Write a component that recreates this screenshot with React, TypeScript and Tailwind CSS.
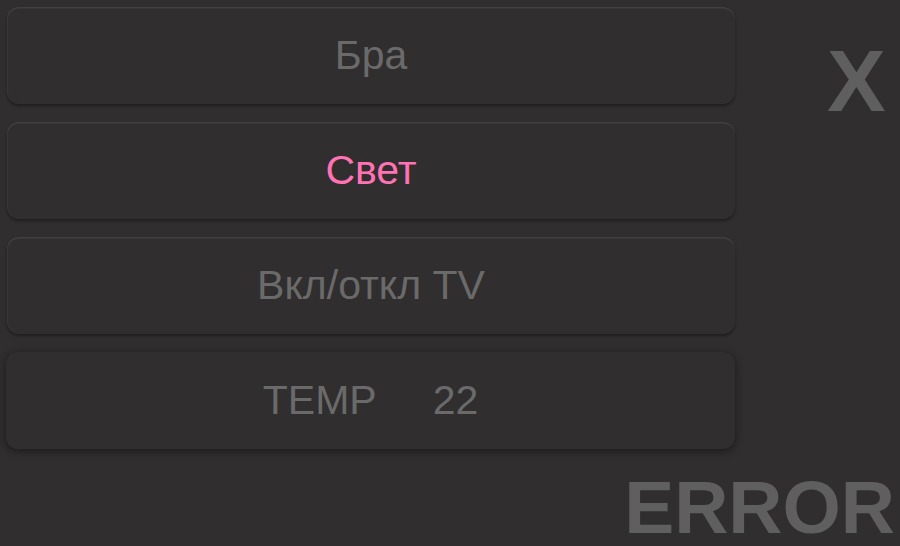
import React from 'react';

const buttons = [
  { label: 'Бра', active: false },
  { label: 'Свет', active: true },
  { label: 'Вкл/откл TV', active: false },
];

const App: React.FC = () => {
  return (
    <div className="w-[900px] h-[546px] overflow-hidden bg-[#302e2f] flex flex-col" style={{ fontFamily: '"Liberation Sans", Arial, sans-serif' }}>
      <div className="flex">
        <div className="w-[742px] pl-[7px] pr-[7px] pt-[7px] flex flex-col gap-[18px]">
          {buttons.map(b => (
            <div
              key={b.label}
              className="h-[97px] rounded-[12px] bg-[#302e2f] flex items-center justify-center text-[41px] leading-none shadow-[inset_0_1.5px_1px_rgba(255,255,255,0.09),inset_1px_0_1px_rgba(255,255,255,0.04),0_2px_3px_rgba(0,0,0,0.35)]"
            >
              <span className={b.active ? 'text-[#ff72b3]' : 'text-[#6b6a6a]'}>{b.label}</span>
            </div>
          ))}
          {/* температура: без подсветки сверху, тень шире */}
          <div className="h-[97px] -ml-[1px] rounded-[12px] bg-[#302e2f] flex items-center justify-center text-[41px] leading-none text-[#6b6a6a] shadow-[0_2px_8px_rgba(0,0,0,0.45)]">
            <span>TEMP</span>
            <span className="ml-[56px]">22</span>
          </div>
        </div>
        <div className="flex-1 flex pt-[37px] pl-[85px]">
          <span className="text-[88px] font-bold leading-none text-[#5f5f5f]">X</span>
        </div>
      </div>
      <div className="flex justify-end pr-[5px] mt-[21px]">
        <span className="text-[75px] font-bold leading-none text-[#5f5f5f]">ERROR</span>
      </div>
    </div>
  );
};

export default App;
